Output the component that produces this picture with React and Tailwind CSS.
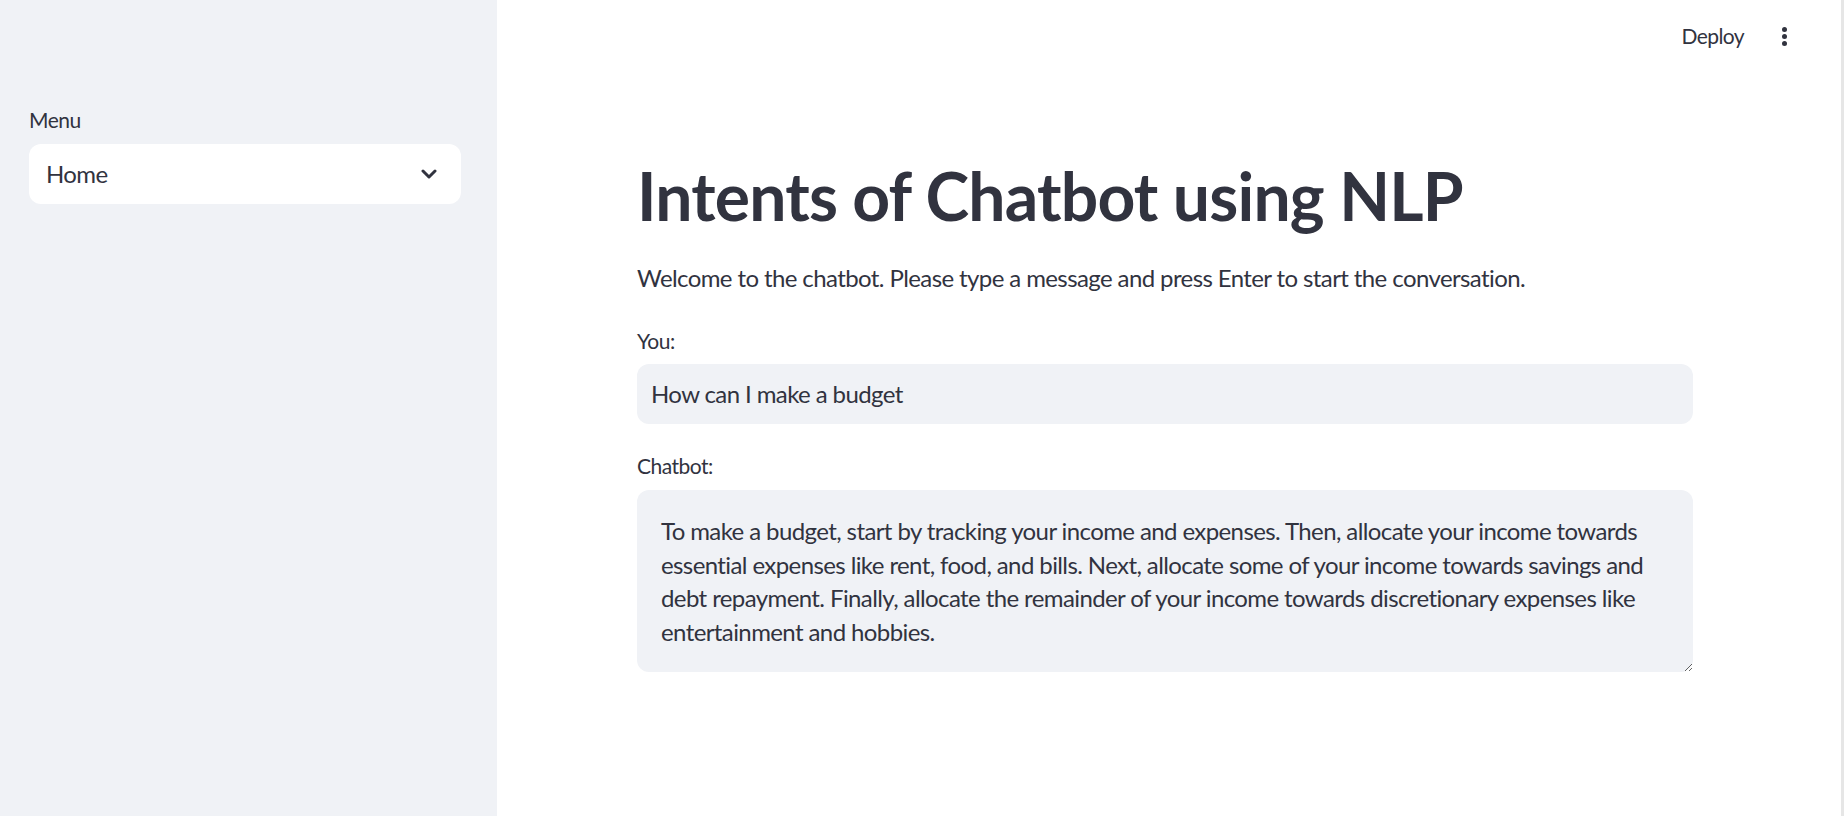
import React from "react";

const answer =
  "To make a budget, start by tracking your income and expenses. Then, allocate your income towards essential expenses like rent, food, and bills. Next, allocate some of your income towards savings and debt repayment. Finally, allocate the remainder of your income towards discretionary expenses like entertainment and hobbies.";

const font = { fontFamily: "Lato, 'Noto Sans', sans-serif" };

const Sidebar = () => (
  <aside className="w-[497px] shrink-0 bg-[#f0f2f6] pl-[29px] pr-[36px] pt-[108px]">
    <label className="mb-[12px] block text-[21px] leading-[24px] tracking-[-0.5px] text-[#31333f]">Menu</label>
    <div className="flex h-[60px] items-center justify-between rounded-[12px] bg-white pl-[17px] pr-[24px]">
      <span className="text-[24px] tracking-[-0.6px] text-[#31333f]">Home</span>
      <svg width="16" height="10" viewBox="0 0 16 10" fill="none">
        <path d="M2 2l6 6 6-6" stroke="#31333f" strokeWidth="3" strokeLinecap="round" strokeLinejoin="round" />
      </svg>
    </div>
  </aside>
);

export default function App() {
  return (
    <div className="flex h-[816px] w-full overflow-hidden bg-white text-[#31333f]" style={font}>
      <Sidebar />
      <main className="flex min-w-0 flex-1 flex-col pr-[8px]">
        {/* top bar */}
        <div className="flex h-[72px] items-center justify-end gap-[38px] pr-[46px]">
          <span className="text-[21px] tracking-[-0.6px]">Deploy</span>
          <div className="flex flex-col gap-[2px]">
            <span className="h-[5px] w-[5px] rounded-full bg-[#31333f]" />
            <span className="h-[5px] w-[5px] rounded-full bg-[#31333f]" />
            <span className="h-[5px] w-[5px] rounded-full bg-[#31333f]" />
          </div>
        </div>

        <div className="mx-auto w-[1056px] pt-[84px]">
          <h1 className="text-[66px] font-bold leading-[1.2] tracking-[-0.8px]">Intents of Chatbot using NLP</h1>
          <p className="mt-[24px] text-[24px] leading-[38px] tracking-[-0.6px]">
            Welcome to the chatbot. Please type a message and press Enter to start the conversation.
          </p>

          <label className="mt-[32px] block text-[21px] leading-[24px] tracking-[-0.5px]">You:</label>
          <div className="mt-[11px] flex h-[60px] items-center rounded-[12px] bg-[#f0f2f6] px-[14px] text-[24px] tracking-[-0.6px]">
            How can I make a budget
          </div>

          <label className="mt-[30px] block text-[21px] leading-[24px] tracking-[-0.5px]">Chatbot:</label>
          <textarea
            readOnly
            value={answer}
            className="mt-[12px] block h-[182px] w-full resize-y rounded-[12px] bg-[#f0f2f6] px-[24px] py-[24px] text-[24px] leading-[1.4] tracking-[-0.6px] text-[#31333f] outline-none"
            style={font}
          />
        </div>
      </main>
      <div className="w-[3px] shrink-0 bg-[#e6e6e6]" />
    </div>
  );
}
